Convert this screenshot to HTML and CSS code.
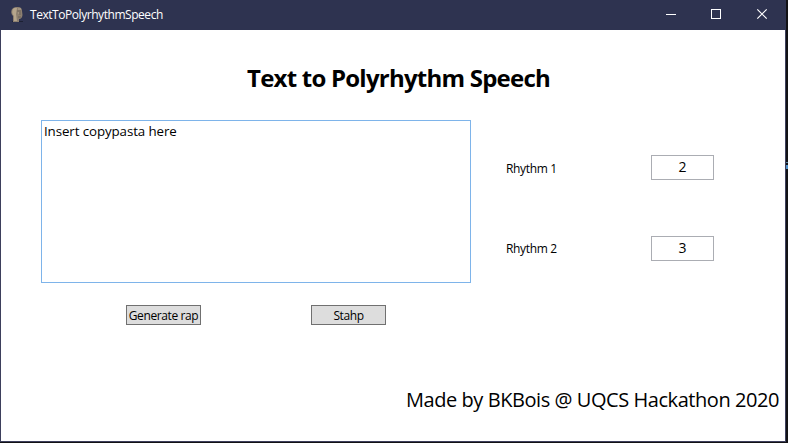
FILE: index.html
```html
<!DOCTYPE html>
<html lang="en">
<head>
<meta charset="utf-8">
<title>TextToPolyrhythmSpeech</title>
<link rel="stylesheet" href="styles.css">
</head>
<body>
<div class="window">
  <header class="titlebar">
    <svg class="app-icon" width="16" height="18" viewBox="0 0 16 18">
      <path d="M3 15.500H14" stroke="#1c2033"/>
      <path d="M3 3Q5 0.500 9 1Q13 1 13 5L13.500 9Q13 13 10 13V16H4V10Q1 7 3 3Z" fill="#8d8070"/>
      <path d="M4 3Q6 1 8 2L7 8L8 15H5V10Q2 7 4 3Z" fill="#b5a58c"/>
      <path d="M8 5H12M11 6V9M9 11H12" stroke="#6e645a" fill="none"/>
      <path d="M9 3H12M9 7H10" stroke="#b3a48f"/>
    </svg>
    <span class="caption">TextToPolyrhythmSpeech</span>
    <svg class="controls" width="138" height="30" viewBox="0 0 138 30" fill="none" stroke="#fff">
      <path d="M18 14.500H28"/>
      <rect x="63.500" y="9.500" width="9" height="9"/>
      <path d="M109.300 9.300L118.700 18.700M118.700 9.300L109.300 18.700" stroke-width="1.200"/>
    </svg>
  </header>
  <main class="content">
    <h1 class="heading">Text to Polyrhythm Speech</h1>
    <div class="panel">
      <div class="textbox">Insert copypasta here</div>
      <div class="fields">
        <div class="field"><span class="label label-first">Rhythm 1</span><div class="number">2</div></div>
        <div class="field"><span class="label">Rhythm 2</span><div class="number">3</div></div>
      </div>
    </div>
    <div class="actions">
      <button class="button">Generate rap</button>
      <button class="button">Stahp</button>
    </div>
    <footer class="credit">Made by BKBois @ UQCS Hackathon 2020</footer>
  </main>
</div>
<div class="edge-mark"></div>
</body>
</html>
```

FILE: styles.css
```css
* { box-sizing: border-box; }
body {
  margin: 0;
  width: 788px;
  height: 443px;
  overflow: hidden;
  background: #121215;
  font-family: "Open Sans", "Noto Sans", sans-serif;
  font-size: 12px;
  color: #000;
}
.window {
  width: 786px;
  height: 442px;
  display: flex;
  flex-direction: column;
  border: solid #3d3f5c;
  border-width: 0 1px 1px;
  background: #fff;
}
.titlebar {
  height: 30px;
  flex: none;
  display: flex;
  align-items: center;
  margin: 0 -1px;
  padding-left: 9px;
  background: #2e3350;
  color: #fff;
}
.app-icon { margin-top: -1px; }
.caption {
  margin-left: 5px;
  line-height: 30px;
  letter-spacing: -0.450px;
}
.controls { margin-left: auto; }
.content { display: flex; flex-direction: column; flex: 1; }
.heading {
  margin: 0;
  padding: 28px 0 0 246px;
  height: 90px;
  font-size: 24px;
  line-height: 40px;
  font-weight: 700;
  letter-spacing: -0.770px;
  white-space: nowrap;
}
.panel { display: flex; margin-left: 40px; height: 163px; }
.textbox {
  width: 430px;
  border: 1px solid #7eb4ea;
  padding: 1px 2px;
  font-size: 13.330px;
  line-height: 18px;
  letter-spacing: -0.100px;
}
.fields { padding: 35px 0 0 35px; display: flex; flex-direction: column; gap: 56px; }
.field { display: flex; width: 208px; height: 25px; justify-content: space-between; }
.label { line-height: 26px; letter-spacing: -0.340px; }
.label-first { line-height: 28px; }
.number {
  width: 63px;
  border: 1px solid #abadb3;
  text-align: center;
  font-size: 14px;
  line-height: 21px;
}
.actions { display: flex; gap: 110px; padding: 22px 0 0 125px; }
.button {
  width: 75px;
  height: 20px;
  padding: 1px 0 0;
  border: 1px solid #707070;
  background: #ddd;
  font: inherit;
  line-height: 18px;
  color: #000;
  letter-spacing: -0.400px;
  white-space: nowrap;
}
.credit {
  margin-top: 61px;
  padding-left: 405px;
  font-size: 20px;
  line-height: 28px;
  letter-spacing: -0.440px;
  white-space: nowrap;
}
.edge-mark {
  position: absolute;
  left: 786px;
  top: 162px;
  width: 2px;
  height: 7px;
  border-top: 1px solid #55809c;
  border-bottom: 4px solid #4e8fc7;
}
```
